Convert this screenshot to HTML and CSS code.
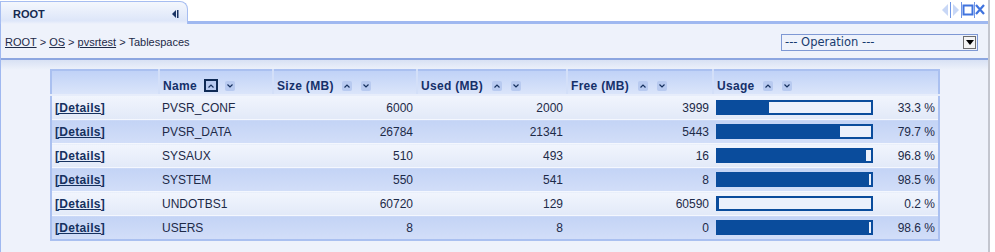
FILE: index.html
```html
<!DOCTYPE html>
<html lang="en">

<head>
  <meta charset="UTF-8">
  <title>ROOT - Tablespaces</title>
  <link rel="stylesheet" href="styles.css">
</head>

<body>
  <div id="frame">
    <!-- tab strip -->
    <div class="tabbar">
      <div class="tab">
        <span class="tab-title">ROOT</span>
        <svg class="tab-collapse" width="8" height="8" viewBox="0 0 8 8">
          <path d="M5 0 L5 8 L1 4 Z" fill="#1b3564"></path>
          <rect x="6" y="0" width="1.5" height="8" fill="#1b3564"></rect>
        </svg>
      </div>
      <div class="win-tools">
        <svg width="46" height="18" viewBox="0 0 46 18">
          <path d="M8 3 L8 15 L2 9 Z" fill="#c8d7f6"></path>
          <rect x="10" y="1" width="1" height="16" fill="#6f95e6"></rect>
          <path d="M13 3 L13 15 L19 9 Z" fill="#c8d7f6"></path>
          <rect x="21" y="1" width="1" height="16" fill="#6f95e6"></rect>
          <rect x="23.5" y="4.5" width="9" height="9" fill="none" stroke="#3f73de" stroke-width="2"></rect>
          <rect x="34" y="1" width="1" height="16" fill="#6f95e6"></rect>
          <path d="M36 4 L44 13 M44 4 L36 13" stroke="#3f73de" stroke-width="2.2"></path>
        </svg>
      </div>
    </div>

    <div class="panel">
      <!-- breadcrumb + operation list -->
      <div class="toolbar">
        <div class="crumbs">
          <a href="#">ROOT</a> &gt; <a href="#">OS</a> &gt; <a href="#">pvsrtest</a> &gt; Tablespaces
        </div>
        <div class="select">
          <span>--- Operation ---</span>
          <span class="select-btn">
            <svg width="8" height="5" viewBox="0 0 8 5"><path d="M0 0 L8 0 L4 5 Z" fill="#000"></path></svg>
          </span>
        </div>
      </div>

      <div class="content">
        <table class="grid">
          <colgroup>
            <col style="width:108px">
            <col style="width:114px">
            <col style="width:144px">
            <col style="width:150px">
            <col style="width:146px">
            <col style="width:226px">
          </colgroup>
          <thead>
            <tr>
              <th></th>
              <th>Name <span class="sort up active"></span><span class="sort down"></span></th>
              <th>Size (MB) <span class="sort up"></span><span class="sort down"></span></th>
              <th>Used (MB) <span class="sort up"></span><span class="sort down"></span></th>
              <th>Free (MB) <span class="sort up"></span><span class="sort down"></span></th>
              <th>Usage <span class="sort up"></span><span class="sort down"></span></th>
            </tr>
          </thead>
          <tbody>
            <tr>
              <td><a class="details" href="#">[Details]</a></td>
              <td>PVSR_CONF</td>
              <td class="num">6000</td>
              <td class="num">2000</td>
              <td class="num">3999</td>
              <td><div class="usage"><div class="bar"><div class="fill" style="width:33.3%"></div></div><span class="pct">33.3 %</span></div></td>
            </tr>
            <tr>
              <td><a class="details" href="#">[Details]</a></td>
              <td>PVSR_DATA</td>
              <td class="num">26784</td>
              <td class="num">21341</td>
              <td class="num">5443</td>
              <td><div class="usage"><div class="bar"><div class="fill" style="width:79.7%"></div></div><span class="pct">79.7 %</span></div></td>
            </tr>
            <tr>
              <td><a class="details" href="#">[Details]</a></td>
              <td>SYSAUX</td>
              <td class="num">510</td>
              <td class="num">493</td>
              <td class="num">16</td>
              <td><div class="usage"><div class="bar"><div class="fill" style="width:96.8%"></div></div><span class="pct">96.8 %</span></div></td>
            </tr>
            <tr>
              <td><a class="details" href="#">[Details]</a></td>
              <td>SYSTEM</td>
              <td class="num">550</td>
              <td class="num">541</td>
              <td class="num">8</td>
              <td><div class="usage"><div class="bar"><div class="fill" style="width:98.5%"></div></div><span class="pct">98.5 %</span></div></td>
            </tr>
            <tr>
              <td><a class="details" href="#">[Details]</a></td>
              <td>UNDOTBS1</td>
              <td class="num">60720</td>
              <td class="num">129</td>
              <td class="num">60590</td>
              <td><div class="usage"><div class="bar"><div class="fill" style="width:0.2%"></div></div><span class="pct">0.2 %</span></div></td>
            </tr>
            <tr>
              <td><a class="details" href="#">[Details]</a></td>
              <td>USERS</td>
              <td class="num">8</td>
              <td class="num">8</td>
              <td class="num">0</td>
              <td><div class="usage"><div class="bar"><div class="fill" style="width:98.6%"></div></div><span class="pct">98.6 %</span></div></td>
            </tr>
          </tbody>
        </table>
      </div>
    </div>
  </div>
</body>

</html>
```

FILE: styles.css
```css
/* page */
body {
  margin: 0;
  background: #fff;
  font-family: "Liberation Sans", Arial, sans-serif;
  font-size: 11px;
  color: #1d2a48;
}

#frame {
  width: 988px;
  height: 252px;
  border-right: 2px solid #c3c6cf;
  background: #eef2fb;
}

/* tab strip */
.tabbar {
  display: flex;
  justify-content: space-between;
  height: 21px;
  background: #fff;
  border-bottom: 3px solid #9fb8f0;
}

.tab {
  display: flex;
  align-items: center;
  justify-content: space-between;
  width: 166px;
  margin-top: 1px;
  margin-bottom: -3px;
  padding: 1px 8px 0 12px;
  border: 1px solid #a6bdf1;
  border-bottom: none;
  border-radius: 0 8px 0 0;
  background: linear-gradient(#f4f7fd, #dde6f9 85%, #eef2fb);
}

.tab-title {
  font-weight: bold;
  font-size: 11px;
  color: #15294f;
}

.win-tools {
  padding: 1px 2px 0 0;
}

/* panel */
.panel {
  border-left: 1px solid #9fb8f0;
}

.toolbar {
  display: flex;
  justify-content: space-between;
  align-items: center;
  height: 36px;
  padding: 2px 10px 0 4px;
  box-sizing: border-box;
  border-bottom: 2px solid #8ca6e0;
}

.crumbs a {
  color: #1d2a48;
}

.select {
  display: flex;
  align-items: center;
  justify-content: space-between;
  width: 191px;
  height: 15px;
  padding: 0 1px 0 3px;
  border: 1px solid #7e98d4;
  background: #eef2fb;
  font-family: "DejaVu Sans", Verdana, sans-serif;
  font-size: 11.5px;
  color: #183a6e;
}

.select-btn {
  display: flex;
  align-items: center;
  justify-content: center;
  width: 11px;
  height: 11px;
  border: 1px solid #6d6d6d;
  background: #f4f4f4;
}

.content {
  padding: 9px 0 12px 49px;
  background: linear-gradient(#d8e1f4, #eef2fb 10px);
}

/* grid */
.grid {
  table-layout: fixed;
  width: 888px;
  border-collapse: collapse;
  border: 2px solid #aac0f0;
  font-size: 12px;
}

.grid th {
  height: 22px;
  padding: 0 0 1px 3px;
  vertical-align: bottom;
  text-align: left;
  font-weight: bold;
  letter-spacing: 0.3px;
  color: #15306a;
  white-space: nowrap;
  background: linear-gradient(#c0d2f7, #dbe5fa);
  border-left: 2px solid #d3dff8;
  border-bottom: 2px solid #e7edfb;
}

.grid th:first-child {
  border-left: none;
}

.sort {
  display: inline-block;
  vertical-align: -1px;
  width: 10px;
  height: 10px;
  margin-left: 5px;
  border-radius: 2px;
  background-color: #b8caf0;
  background-repeat: no-repeat;
  background-position: center;
}

.sort.up {
  background-image: url("data:image/svg+xml,%3Csvg xmlns='http://www.w3.org/2000/svg' width='6' height='4'%3E%3Cpath d='M0.5 3.5 L3 1 L5.5 3.5' fill='none' stroke='%2317315f' stroke-width='1.2'/%3E%3C/svg%3E");
}

.sort.down {
  margin-left: 9px;
  background-image: url("data:image/svg+xml,%3Csvg xmlns='http://www.w3.org/2000/svg' width='6' height='4'%3E%3Cpath d='M0.5 0.5 L3 3 L5.5 0.5' fill='none' stroke='%2317315f' stroke-width='1.2'/%3E%3C/svg%3E");
}

.sort.active {
  width: 10px;
  height: 9px;
  margin-left: 3px;
  border: 2px solid #0f2a55;
  border-radius: 0;
  vertical-align: -2px;
}

.sort.active + .sort.down {
  margin-left: 7px;
}

.grid td {
  height: 23px;
  padding: 0 3px;
  white-space: nowrap;
  border-bottom: 1px solid #f4f7fe;
}

.grid tbody tr:nth-child(odd) td {
  background: linear-gradient(#f1f5fd, #e2e9f8);
}

.grid tbody tr:nth-child(even) td {
  background: linear-gradient(#c3d3f5, #d2def8);
}

.grid tbody tr:last-child td {
  border-bottom: none;
}

.grid td.num {
  text-align: right;
  padding-right: 4px;
}

.details {
  font-weight: bold;
  letter-spacing: 0.3px;
  color: #16315f;
}

/* usage bar */
.usage {
  display: flex;
  align-items: center;
}

.bar {
  width: 153px;
  height: 11px;
  border: 2px solid #0a4c9c;
  background: #ebf0fb;
}

.fill {
  height: 100%;
  background: #0a4c9c;
}

.pct {
  flex: 1;
  text-align: right;
  color: #1d2a48;
}
```
